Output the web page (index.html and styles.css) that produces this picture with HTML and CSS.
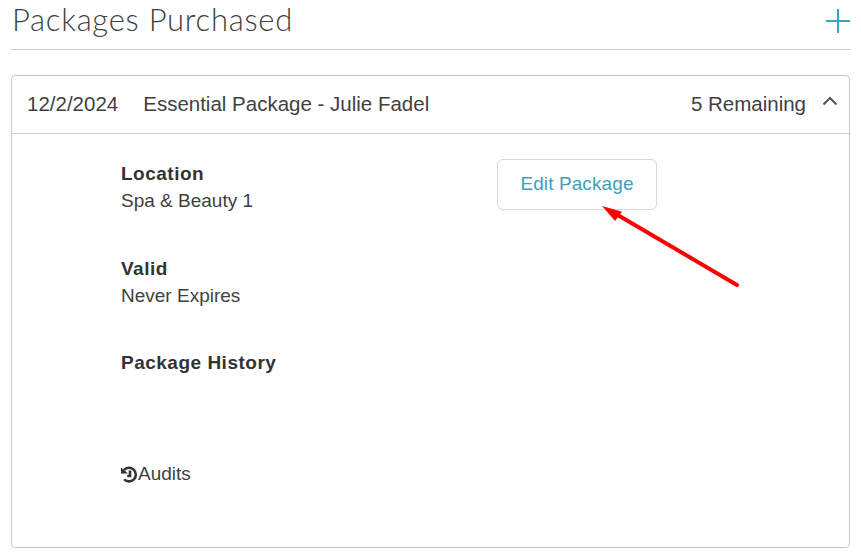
FILE: index.html
```html
<!DOCTYPE html>
<html lang="en">
<head>
    <meta charset="UTF-8">
    <meta name="viewport" content="width=device-width, initial-scale=1.0">
    <title>Packages Purchased</title>
    <link rel="stylesheet" href="styles.css">
</head>
<body>
    <div class="page">
        <div class="title-row">
            <h2>Packages Purchased</h2>
            <svg class="add-icon" width="24" height="24" viewBox="0 0 24 24"><path d="M12 0V24M0 12H24" /></svg>
        </div>

        <div class="package-card">
            <div class="package-header">
                <span class="package-date">12/2/2024</span>
                <span class="package-name">Essential Package - Julie Fadel</span>
                <span class="package-remaining">5 Remaining</span>
                <svg class="chevron" width="16" height="10" viewBox="0 0 16 10"><path d="M1.5 8.5L8 2L14.5 8.5" /></svg>
            </div>

            <div class="package-body">
                <div class="details">
                    <div class="detail-group">
                        <div class="detail-label">Location</div>
                        <div>Spa &amp; Beauty 1</div>
                    </div>
                    <div class="detail-group">
                        <div class="detail-label">Valid</div>
                        <div>Never Expires</div>
                    </div>
                    <div class="detail-group">
                        <div class="detail-label">Package History</div>
                    </div>
                    <div class="audits">
                        <svg width="17" height="17" viewBox="0 0 17 17"><path class="audit-ring" d="M3 4A6.8 6.8 0 1 1 3.2 13.4" /><path class="audit-head" d="M0 1.6L7 7.6H0Z" /><path class="audit-hand" d="M9 4.6V10H6.2" /></svg>
                        <span>Audits</span>
                    </div>
                </div>
                <button type="button" class="edit-btn">Edit Package</button>
            </div>
        </div>
    </div>

    <svg class="arrow" width="150" height="100" viewBox="0 0 150 100"><path class="arrow-line" d="M136 83L15 12" /><path class="arrow-head" d="M1 4L21 9.7L14 19Z" /></svg>
</body>
</html>
```

FILE: styles.css
```css
/* General Styles */
body {
    font-family: "Liberation Sans", Arial, sans-serif;
    font-size: 19px;
    color: #3f3f3f;
    background-color: #fff;
    margin: 0;
}

.page {
    padding: 0 11px 0 11px;
}

.title-row {
    display: flex;
    justify-content: space-between;
    align-items: center;
    height: 49px;
    border-bottom: 1px solid #ccc;
}

h2 {
    font-family: Lato, sans-serif;
    font-size: 31px;
    font-weight: 300;
    letter-spacing: 0.72px;
    color: #3f3f3f;
    margin: 0 0 11px 1px;
}

.add-icon {
    margin: 0 0 7px 0;
    fill: none;
    stroke: #3aa5bd;
    stroke-width: 2;
}

.package-card {
    margin-top: 25px;
    height: 473px;
    box-sizing: border-box;
    border: 1px solid #c8c8c8;
    border-radius: 4px;
}

.package-header {
    display: flex;
    align-items: center;
    height: 55px;
    padding: 0 11px 2px 15px;
    font-size: 20.5px;
    border-bottom: 1px solid #ccc;
}

.package-date {
    margin-right: 25px;
}

.package-remaining {
    margin-left: auto;
    margin-right: 16px;
}

.chevron {
    margin-bottom: 5px;
    fill: none;
    stroke: #555;
    stroke-width: 2;
}

.package-body {
    display: flex;
    padding: 25px 0 0 109px;
}

.details {
    width: 376px;
}

.detail-group {
    margin-bottom: 39.5px;
    line-height: 27px;
}

.detail-label {
    font-weight: bold;
    letter-spacing: 0.5px;
    color: #333;
    padding-top: 1px;
}

.audits {
    display: flex;
    align-items: center;
    margin-top: 86px;
    line-height: 24px;
}

.audit-ring,
.audit-hand {
    fill: none;
    stroke: #333;
    stroke-width: 2.6;
}

.audit-head {
    fill: #333;
}

.edit-btn {
    width: 160px;
    height: 51px;
    padding-bottom: 3px;
    background-color: #fff;
    border: 1px solid #d8d8d8;
    border-radius: 6px;
    font-family: "Liberation Sans", Arial, sans-serif;
    font-size: 19px;
    letter-spacing: 0.1px;
    color: #3d9fb8;
    cursor: pointer;
}

/* Annotation on top of the screenshot */
.arrow {
    position: absolute;
    left: 601px;
    top: 202px;
}

.arrow-line {
    fill: none;
    stroke: #f00;
    stroke-width: 4;
    stroke-linecap: round;
}

.arrow-head {
    fill: #f00;
}
```
